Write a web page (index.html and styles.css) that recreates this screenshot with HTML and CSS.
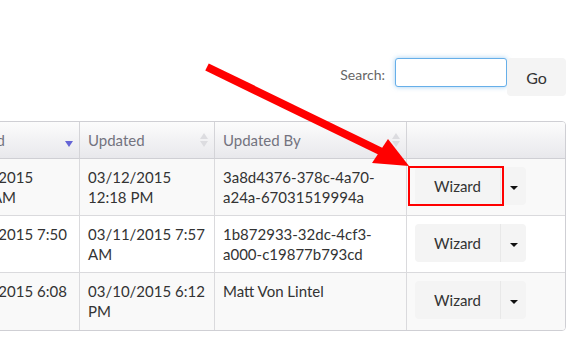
FILE: index.html
```html
<!DOCTYPE html>
<html lang="en">
<head>
    <meta charset="UTF-8">
    <title>Reports</title>
    <link rel="stylesheet" href="styles.css">
</head>
<body>

    <div class="page">
        <div class="search-bar">
            <label for="search">Search:</label>
            <input type="text" id="search">
            <button class="go-btn">Go</button>
        </div>

        <div class="table-wrap">
            <table>
                <thead>
                    <tr>
                        <th class="col-created">
                            <div class="th-inner">
                                <span>Ordered</span>
                                <svg class="sort" width="8" height="14" viewBox="0 0 8 14"><path d="M0 8 L8 8 L4 14 Z" fill="#6565d6"/></svg>
                            </div>
                        </th>
                        <th class="col-updated">
                            <div class="th-inner">
                                <span>Updated</span>
                                <svg class="sort" width="8" height="14" viewBox="0 0 8 14"><path d="M4 0 L8 6 L0 6 Z M0 8 L8 8 L4 14 Z" fill="#dcdce0"/></svg>
                            </div>
                        </th>
                        <th class="col-by">
                            <div class="th-inner">
                                <span>Updated By</span>
                                <svg class="sort" width="8" height="14" viewBox="0 0 8 14"><path d="M4 0 L8 6 L0 6 Z M0 8 L8 8 L4 14 Z" fill="#dcdce0"/></svg>
                            </div>
                        </th>
                        <th class="col-actions"></th>
                    </tr>
                </thead>
                <tbody id="reportTable">
                    <!-- rows are added by the script below -->
                </tbody>
            </table>
        </div>
    </div>

    <svg class="annotation" width="576" height="352" viewBox="0 0 576 352">
        <line x1="207" y1="67" x2="382" y2="152" stroke="#ff0000" stroke-width="8"/>
        <polygon points="409,166 372,163 388,139" fill="#ff0000"/>
        <rect x="409" y="167" width="94" height="38" fill="none" stroke="#ff0000" stroke-width="2"/>
    </svg>

    <script>
        let reports = [
            { created: "03/12/2015 11:58 AM", updated: "03/12/2015 12:18 PM", by: "3a8d4376-378c-4a70-a24a-67031519994a" },
            { created: "03/11/2015 7:50 AM", updated: "03/11/2015 7:57 AM", by: "1b872933-32dc-4cf3-a000-c19877b793cd" },
            { created: "03/10/2015 6:08 PM", updated: "03/10/2015 6:12 PM", by: "Matt Von Lintel" }
        ];

        function addReportToTable(data) {
            let table = document.getElementById("reportTable");
            let row = table.insertRow();
            row.insertCell(0).textContent = data.created;
            row.insertCell(1).textContent = data.updated;
            row.insertCell(2).textContent = data.by;
            row.insertCell(3).innerHTML =
                '<div class="btn-group">' +
                '<button class="wizard-btn">Wizard</button>' +
                '<button class="caret-btn"><span class="caret"></span></button>' +
                '</div>';
        }

        reports.forEach(addReportToTable);
    </script>

</body>
</html>
```

FILE: styles.css
```css
* {
    box-sizing: border-box;
}

body {
    margin: 0;
    font-family: Lato, "Open Sans", sans-serif;
    background-color: #fff;
    color: #333;
    overflow: hidden;
}

.page {
    padding-top: 58px;
}

.search-bar {
    display: flex;
    justify-content: flex-end;
    align-items: flex-start;
    padding-right: 10px;
}

.search-bar label {
    font-size: 14px;
    color: #666;
    line-height: 20px;
    padding-top: 7px;
    margin-right: 10px;
}

.search-bar input {
    width: 112px;
    height: 29px;
    border: 1px solid #66afe9;
    border-radius: 3px;
    box-shadow: 0 0 5px rgba(102, 175, 233, 0.6);
    outline: none;
    font-family: inherit;
}

.go-btn {
    width: 59px;
    height: 38px;
    border: none;
    border-radius: 4px;
    background-color: #f4f4f4;
    color: #333;
    font-family: inherit;
    font-size: 16px;
}

.table-wrap {
    margin-top: 25px;
    margin-left: -59px;
    width: 625px;
    border: 1px solid #cfcfd4;
    border-radius: 4px;
    overflow: hidden;
}

table {
    width: 100%;
    border-collapse: separate;
    border-spacing: 0;
    table-layout: fixed;
    font-size: 15px;
}

.col-created { width: 138px; }
.col-updated { width: 135px; }
.col-by { width: 192px; }

th {
    height: 37px;
    padding: 0 6px 0 8px;
    background: linear-gradient(#fcfcfc, #e8e8ec);
    color: #73737f;
    font-weight: normal;
    text-align: left;
    border-right: 1px solid #d4d4d8;
    border-bottom: 1px solid #cfcfd4;
}

.th-inner {
    display: flex;
    justify-content: space-between;
    align-items: center;
    white-space: nowrap;
}

th:last-child,
td:last-child {
    border-right: none;
}

td {
    height: 57px;
    padding: 8px;
    line-height: 20px;
    vertical-align: top;
    border-right: 1px solid #dadadd;
    border-bottom: 1px solid #dadadd;
    word-wrap: break-word;
}

tbody tr:nth-child(odd) td {
    background-color: #f9f9f9;
}

tbody tr:last-child td {
    border-bottom: none;
}

.btn-group {
    display: flex;
}

.wizard-btn,
.caret-btn {
    height: 38px;
    border: none;
    background-color: #f4f4f4;
    color: #333;
    font-family: inherit;
    font-size: 15px;
    padding: 0;
}

.wizard-btn {
    width: 86px;
    border-radius: 4px 0 0 4px;
    border-right: 1px solid #e8e8e8;
}

.caret-btn {
    width: 25px;
    border-radius: 0 4px 4px 0;
}

.caret {
    display: inline-block;
    border-top: 4px solid #111;
    border-left: 4px solid transparent;
    border-right: 4px solid transparent;
    vertical-align: middle;
}

.annotation {
    position: absolute;
    top: 0;
    left: 0;
    pointer-events: none;
}
```
